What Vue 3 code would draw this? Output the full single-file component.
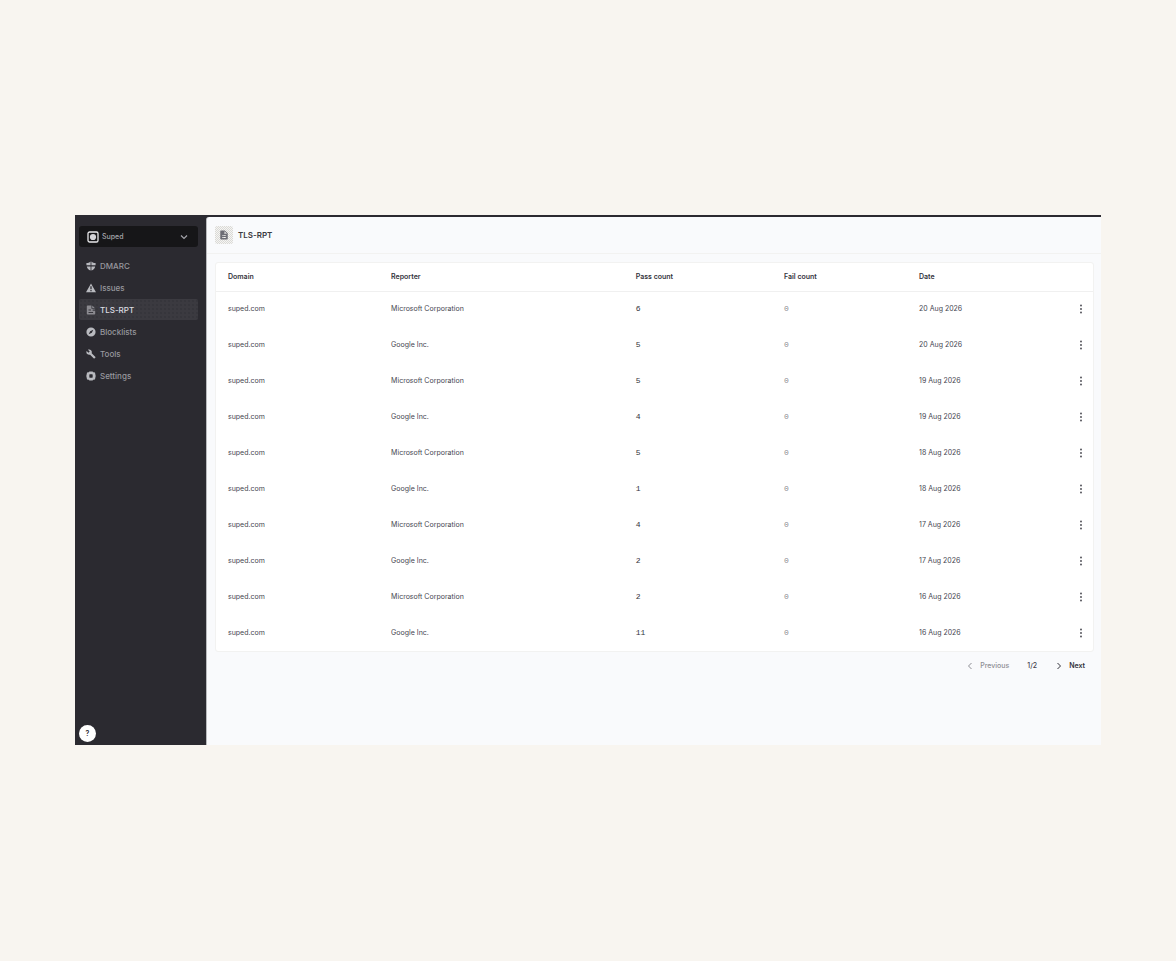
<template>
    <div class="page">
        <div class="app">
            <aside class="sidebar">
                <button class="sidebar-team" type="button">
                    <svg class="sidebar-team-logo" viewBox="0 0 12 12">
                        <rect x="1" y="1" width="10" height="10" rx="1.6" fill="none" stroke="#e8e8ea" stroke-width="1.3" />
                        <circle cx="6" cy="6" r="3.1" fill="#d4d4d8" />
                    </svg>
                    <span>Suped</span>
                    <svg class="sidebar-team-arrow" viewBox="0 0 8 8">
                        <path d="M1 2.5L4 5.5L7 2.5" fill="none" stroke="#a4a4aa" stroke-width="1.2" />
                    </svg>
                </button>

                <nav class="sidebar-nav">
                    <a
                        v-for="link in links"
                        :key="link.title"
                        href="#"
                        class="sidebar-nav-link"
                        :class="{ 'sidebar-nav-link_active': link.active }"
                    >
                        <svg viewBox="0 0 24 24">
                            <path :d="link.icon" fill="currentColor" fill-rule="evenodd" />
                        </svg>
                        {{ link.title }}
                    </a>
                </nav>

                <button class="sidebar-help" type="button" aria-label="Help">?</button>
            </aside>

            <main class="main">
                <header class="main-head">
                    <div class="main-head-icon">
                        <svg viewBox="0 0 24 24">
                            <path :d="fileIcon" fill="currentColor" fill-rule="evenodd" />
                        </svg>
                    </div>
                    <h1>TLS-RPT</h1>
                </header>

                <div class="main-body">
                    <div class="card">
                        <table class="reports">
                            <colgroup>
                                <col class="col-domain">
                                <col class="col-reporter">
                                <col class="col-pass">
                                <col class="col-fail">
                                <col class="col-date">
                                <col class="col-menu">
                            </colgroup>
                            <thead>
                                <tr>
                                    <th>Domain</th>
                                    <th>Reporter</th>
                                    <th>Pass count</th>
                                    <th>Fail count</th>
                                    <th>Date</th>
                                    <th></th>
                                </tr>
                            </thead>
                            <tbody>
                                <tr v-for="(report, index) in reports" :key="index">
                                    <td>suped.com</td>
                                    <td>{{ report.reporter }}</td>
                                    <td class="reports-pass">{{ report.pass }}</td>
                                    <td class="reports-fail">0</td>
                                    <td>{{ report.date }}</td>
                                    <td class="reports-menu">
                                        <button type="button" aria-label="Actions">
                                            <svg viewBox="0 0 4 10">
                                                <circle cx="2" cy="1.5" r="0.9" />
                                                <circle cx="2" cy="5" r="0.9" />
                                                <circle cx="2" cy="8.5" r="0.9" />
                                            </svg>
                                        </button>
                                    </td>
                                </tr>
                            </tbody>
                        </table>
                    </div>

                    <div class="pager">
                        <button class="pager-prev" type="button" disabled>
                            <svg viewBox="0 0 8 8">
                                <path d="M5.5 1L2.5 4L5.5 7" />
                            </svg>
                            Previous
                        </button>
                        <span>1/2</span>
                        <button class="pager-next" type="button">
                            <svg viewBox="0 0 8 8">
                                <path d="M2.5 1L5.5 4L2.5 7" />
                            </svg>
                            Next
                        </button>
                    </div>
                </div>
            </main>
        </div>
    </div>
</template>

<script setup>
    const fileIcon = 'M3 3a2 2 0 0 1 2-2h9l7 7v13a2 2 0 0 1-2 2H5a2 2 0 0 1-2-2zM13 3v6h6zM8 12v2h9v-2zM8 17v2h9v-2z'

    const links = [
        { title: 'DMARC', icon: 'M11 1v9H1V5c4 0 7-1 10-4zM13 1c3 3 6 4 10 4v5H13zM2 13h9v10C6 21 3 18 2 13zM13 13h9c-1 5-4 8-9 10z' },
        { title: 'Issues', icon: 'M12 1L24 22H0zM10.5 8v7h3V8zM10.5 17v2.5h3V17z' },
        { title: 'TLS-RPT', icon: 'M2 3a2 2 0 0 1 2-2h9v8h8v2h-5v3h6v7a2 2 0 0 1-2 2H4a2 2 0 0 1-2-2zM15 1l6 6h-6zM6 11v2h6v-2zM6 17v2h11v-2z', active: true },
        { title: 'Blocklists', icon: 'M12 1a11 11 0 1 0 0 22a11 11 0 0 0 0-22zM17.5 6.5l-3.5 7.5l-7.5 3.5l3.5-7.5z' },
        { title: 'Tools', icon: 'M22.7 19l-9.1-9.1c.9-2.3.4-5-1.5-6.9c-2-2-5-2.4-7.4-1.3L9 6L6 9L1.6 4.7C.4 7.1.9 10.1 2.9 12.1c1.9 1.9 4.6 2.4 6.9 1.5l9.1 9.1c.4.4 1 .4 1.4 0l2.3-2.3c.5-.4.5-1.1.1-1.4z' },
        { title: 'Settings', icon: 'M8 1h8l1 2h3l2 2v3l1 1v6l-1 1v3l-2 2h-3l-1 2H8l-1-2H4l-2-2v-3l-1-1V9l1-1V5l2-2h3zM9 8L8 9v6l1 1h6l1-1V9l-1-1z' }
    ]

    const reports = [
        { reporter: 'Microsoft Corporation', pass: 6, date: '20 Aug 2026' },
        { reporter: 'Google Inc.', pass: 5, date: '20 Aug 2026' },
        { reporter: 'Microsoft Corporation', pass: 5, date: '19 Aug 2026' },
        { reporter: 'Google Inc.', pass: 4, date: '19 Aug 2026' },
        { reporter: 'Microsoft Corporation', pass: 5, date: '18 Aug 2026' },
        { reporter: 'Google Inc.', pass: 1, date: '18 Aug 2026' },
        { reporter: 'Microsoft Corporation', pass: 4, date: '17 Aug 2026' },
        { reporter: 'Google Inc.', pass: 2, date: '17 Aug 2026' },
        { reporter: 'Microsoft Corporation', pass: 2, date: '16 Aug 2026' },
        { reporter: 'Google Inc.', pass: 11, date: '16 Aug 2026' }
    ]
</script>

<style>
    body {
        margin: 0;
        background-color: #f8f5f0;
    }
</style>

<style scoped>
    .page {
        display: flex;
        box-sizing: border-box;
        min-height: 100vh;
        padding: 215px 75px 216px;
        font-family: Inter, sans-serif;
        font-size: 7px;
        line-height: 12px;
        color: #45454f;
    }

    button {
        font: inherit;
        color: inherit;
        border: none;
        background: none;
        padding: 0;
        cursor: pointer;
    }

    svg {
        display: block;
        flex-shrink: 0;
    }

    .app {
        flex: 1;
        display: flex;
        background-color: #2b2a30;
    }

    .sidebar {
        width: 131px;
        flex-shrink: 0;
        box-sizing: border-box;
        padding: 11px 8px 3px 4px;
        display: flex;
        flex-direction: column;
    }

    .sidebar-team {
        display: flex;
        align-items: center;
        gap: 3px;
        height: 21px;
        padding: 0 10px 0 8px;
        border-radius: 3px;
        background-color: #161618;
        color: #a6a6ac;
        font-weight: 500;
    }

    .sidebar-team-logo {
        width: 12px;
        height: 12px;
    }

    .sidebar-team-arrow {
        width: 8px;
        height: 8px;
        margin-left: auto;
    }

    .sidebar-nav {
        display: flex;
        flex-direction: column;
        gap: 1px;
        margin-top: 8px;
    }

    .sidebar-nav-link {
        display: flex;
        align-items: center;
        gap: 4px;
        height: 21px;
        padding: 0 7px;
        border-radius: 2px;
        color: #98989e;
        font-weight: 500;
        font-size: 8px;
        text-decoration: none;
    }

    .sidebar-nav-link svg {
        width: 10px;
        height: 10px;
        color: #b9babf;
    }

    .sidebar-nav-link_active {
        background-color: #3b3a40;
        background-image: radial-gradient(#323137 20%, transparent 30%);
        background-size: 4px 4px;
        color: #dcdce0;
    }

    .sidebar-nav-link_active svg {
        color: #8b8a90;
    }

    .sidebar-help {
        width: 17px;
        height: 17px;
        margin-top: auto;
        border-radius: 50%;
        background-color: #fff;
        color: #2b2a30;
        font-weight: 600;
    }

    .main {
        flex: 1;
        min-width: 0;
        margin-top: 2px;
        border-left: 1px solid #b9babd;
        border-radius: 3px 0 0 0;
        background-color: #f9fafc;
    }

    .main-head {
        display: flex;
        align-items: center;
        gap: 5px;
        height: 36px;
        padding-left: 8px;
        border-bottom: 1px solid #f2f2f1;
    }

    .main-head-icon {
        width: 18px;
        height: 18px;
        display: flex;
        align-items: center;
        justify-content: center;
        border-radius: 2px;
        background: repeating-conic-gradient(#d9d9d7 0 25%, #f6f5f2 0 50%) 0 0 / 2px 2px;
        color: #6c6c74;
    }

    .main-head-icon svg {
        width: 10px;
        height: 10px;
    }

    .main-head h1 {
        margin: 0;
        color: #3a3a42;
        font-size: 8px;
        font-weight: 600;
    }

    .main-body {
        padding: 8px 7px 16px 8px;
    }

    .card {
        border: 1px solid #f2f2f1;
        border-radius: 3px;
        background-color: #fff;
    }

    .reports {
        width: 100%;
        table-layout: fixed;
        border-collapse: collapse;
    }

    .reports th,
    .reports td {
        box-sizing: border-box;
        padding: 0 12px;
        text-align: left;
        white-space: nowrap;
    }

    .reports th {
        height: 28px;
        border-bottom: 1px solid #f0f0f0;
        color: #33333b;
        font-weight: 600;
    }

    .reports td {
        height: 36px;
    }

    .col-domain {
        width: 18.6%;
    }

    .col-reporter {
        width: 27.9%;
    }

    .col-pass {
        width: 16.9%;
    }

    .col-fail {
        width: 15.4%;
    }

    .col-menu {
        width: 4%;
    }

    .reports .reports-pass,
    .reports .reports-fail {
        font-family: "Liberation Mono", monospace;
        font-size: 8px;
    }

    .reports .reports-pass {
        color: #33333b;
    }

    .reports .reports-fail {
        color: #8b8b92;
    }

    .reports .reports-menu {
        padding: 0 10px 0 0;
    }

    .reports-menu button {
        display: block;
        margin-left: auto;
    }

    .reports-menu svg {
        width: 4px;
        height: 10px;
        fill: #45454d;
    }

    .pager {
        display: flex;
        justify-content: flex-end;
        align-items: center;
        gap: 18px;
        margin-top: 8px;
        padding-right: 9px;
        font-weight: 500;
    }

    .pager button {
        display: flex;
        align-items: center;
        gap: 6px;
    }

    .pager svg {
        width: 8px;
        height: 8px;
        fill: none;
        stroke: currentColor;
        stroke-width: 1;
    }

    .pager-prev {
        color: #8e8e94;
    }

    .pager-next {
        color: #33333b;
        font-weight: 600;
    }
</style>
